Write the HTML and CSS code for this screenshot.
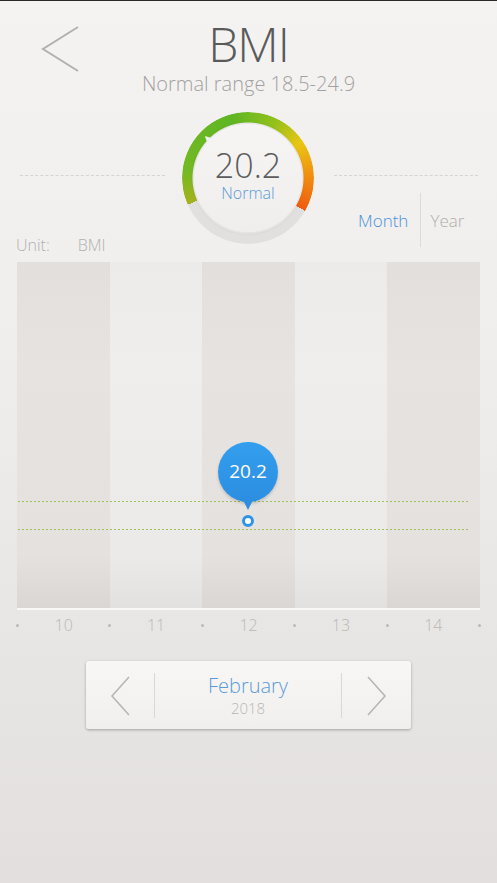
FILE: index.html
```html
<!DOCTYPE html>
<html lang="en">
<head>
    <meta charset="UTF-8">
    <meta name="viewport" content="width=device-width, initial-scale=1.0">
    <title>BMI</title>
    <link rel="stylesheet" href="styles.css">
</head>
<body>
    <header class="top">
        <a class="back" href="#">
            <svg width="40" height="48" viewBox="0 0 40 48"><polyline points="38,2 3,24 38,46" fill="none" stroke="#b3b1b0" stroke-width="2"/></svg>
        </a>
        <div class="title-block">
            <h1>BMI</h1>
            <p class="range">Normal range 18.5-24.9</p>
        </div>
        <span></span>
    </header>

    <section class="summary">
        <div class="side left">
            <div class="dots"></div>
            <div class="unit"><span>Unit:</span><span>BMI</span></div>
        </div>
        <div class="gauge">
            <div class="ring"></div>
            <div class="dial">
                <div class="value">20.2</div>
                <div class="state">Normal</div>
            </div>
        </div>
        <div class="side right">
            <div class="dots"></div>
            <div class="period">
                <span class="active">Month</span>
                <span class="sep"></span>
                <span>Year</span>
            </div>
        </div>
    </section>

    <section class="chart">
        <div class="col dark"></div>
        <div class="col"></div>
        <div class="col dark"></div>
        <div class="col"></div>
        <div class="col dark"></div>
        <div class="limit upper"></div>
        <div class="limit lower"></div>
        <div class="bubble">20.2</div>
        <div class="point"></div>
    </section>

    <div class="axis">
        <i></i><span>10</span><i></i><span>11</span><i></i><span>12</span><i></i><span>13</span><i></i><span>14</span><i></i>
    </div>

    <div class="pager">
        <a class="arrow" href="#">
            <svg width="20" height="40" viewBox="0 0 20 40"><polyline points="19,1 2,20 19,39" fill="none" stroke="#b8b6b4" stroke-width="1.6"/></svg>
        </a>
        <div class="month">
            <div class="name">February</div>
            <div class="year">2018</div>
        </div>
        <a class="arrow" href="#">
            <svg width="20" height="40" viewBox="0 0 20 40"><polyline points="1,1 18,20 1,39" fill="none" stroke="#b8b6b4" stroke-width="1.6"/></svg>
        </a>
    </div>
</body>
</html>
```

FILE: styles.css
```css
body {
    font-family: 'Open Sans', 'Liberation Sans', sans-serif;
    font-weight: 300;
    margin: 0;
    min-height: 882px;
    border-top: 1px solid #2a2a2a;
    background: linear-gradient(#f4f3f2, #efeeed 40%, #e2dfde);
    color: #555;
}
.top {
    display: grid;
    grid-template-columns: 1fr auto 1fr;
    align-items: start;
}
.back {
    margin: 24px 0 0 40px;
    width: 40px;
}
.title-block {
    text-align: center;
}
h1 {
    margin: 15px 0 0;
    font-size: 48px;
    font-weight: 300;
    line-height: 56px;
    color: #5a5a5a;
    letter-spacing: -1px;
}
.range {
    margin: 0;
    font-size: 20px;
    line-height: 24px;
    color: #a3a1a0;
}
.summary {
    display: grid;
    grid-template-columns: 182px 132px 1fr;
    height: 147px;
    margin-top: 13px;
}
.side {
    display: flex;
    flex-direction: column;
}
.dots {
    margin-top: 66px;
    border-top: 1px dashed #d6d4d2;
}
.left .dots {
    margin-left: 20px;
    margin-right: 17px;
}
.right .dots {
    margin-left: 20px;
    margin-right: 19px;
}
.unit {
    margin-top: auto;
    margin-left: 16px;
    display: flex;
    gap: 28px;
    font-size: 16px;
    line-height: 22px;
    color: #b2b0ae;
}
.gauge {
    position: relative;
    width: 132px;
    height: 132px;
    margin-top: 3px;
    display: grid;
    place-items: center;
}
.gauge::after {
    content: "";
    position: absolute;
    left: 22px;
    top: 23px;
    border-left: 3px solid transparent;
    border-right: 3px solid transparent;
    border-bottom: 6px solid #f0f1ea;
    transform: rotate(-45deg);
}
.ring {
    position: absolute;
    inset: 0;
    border-radius: 50%;
    background: conic-gradient(from 246deg, #a5b21c 0deg, #74b922 30deg, #5fb623 100deg, #93c11c 140deg, #e9c612 170deg, #f09a12 195deg, #ef5c0e 234deg, #e1e0de 234deg, #e1e0de 360deg);
    -webkit-mask: radial-gradient(circle, transparent 55px, #000 56px);
    mask: radial-gradient(circle, transparent 55px, #000 56px);
}
.dial {
    position: relative;
    width: 108px;
    height: 108px;
    border-radius: 50%;
    background: linear-gradient(#f6f5f4, #efeeed);
    box-shadow: 0 0 4px rgba(0,0,0,0.12);
    text-align: center;
}
.value {
    margin-top: 25px;
    font-size: 34px;
    line-height: 32px;
    color: #5c5c5c;
}
.state {
    margin-top: 4px;
    font-size: 16px;
    line-height: 16px;
    color: #5b9bd5;
}
.period {
    margin-top: auto;
    margin-left: 44px;
    display: flex;
    align-items: center;
    height: 54px;
    font-size: 17px;
    color: #b0aeac;
    margin-bottom: 9px;
}
.period .active {
    color: #4a90d9;
}
.sep {
    width: 1px;
    height: 54px;
    background: #dcdad8;
    margin: 0 9px 0 12px;
}
.chart {
    position: relative;
    display: flex;
    height: 346px;
    margin: 6px 17px 0;
    border-bottom: 2px solid #f8f7f6;
    box-shadow: inset 0 8px 10px -6px rgba(0,0,0,0.12), inset 3px 0 6px -3px rgba(0,0,0,0.12), inset -3px 0 6px -3px rgba(0,0,0,0.12);
}
.col {
    flex: 1;
    background: linear-gradient(#ecebe9, #efeeec 30%, #eceae8 85%, #e3e1df);
}
.col.dark {
    background: linear-gradient(#e2dfdd, #e6e3e1 30%, #e4e1df 85%, #d9d6d4);
}
.limit {
    position: absolute;
    left: 1px;
    right: 12px;
    height: 1px;
    background: repeating-linear-gradient(to right, #9cc35a 0 2px, transparent 2px 4px);
}
.limit.upper {
    top: 239px;
}
.limit.lower {
    top: 267px;
}
.bubble {
    position: absolute;
    left: 201px;
    top: 180px;
    width: 60px;
    height: 60px;
    border-radius: 50%;
    background: linear-gradient(#349eee, #2c8ee0);
    box-shadow: 0 2px 3px rgba(0,0,0,0.15);
    color: #fff;
    font-weight: 400;
    font-size: 19px;
    line-height: 58px;
    text-align: center;
}
.bubble::after {
    content: "";
    position: absolute;
    left: 23px;
    top: 54px;
    border-left: 7px solid transparent;
    border-right: 7px solid transparent;
    border-top: 14px solid #2c8ee0;
}
.point {
    position: absolute;
    left: 225px;
    top: 253px;
    width: 6px;
    height: 6px;
    border: 3px solid #2e94e6;
    border-radius: 50%;
    background: #fff;
}
.axis {
    display: flex;
    align-items: center;
    height: 30px;
    margin: 0 16px;
}
.axis i {
    width: 3px;
    height: 3px;
    border-radius: 50%;
    background: #bcb9b7;
}
.axis span {
    flex: 1;
    text-align: center;
    font-size: 16px;
    color: #bab7b5;
}
.pager {
    display: grid;
    grid-template-columns: 68px 1fr 69px;
    width: 325px;
    height: 68px;
    margin: 21px auto 0;
    border-radius: 3px;
    background: linear-gradient(#f8f7f6, #f0efee);
    box-shadow: 0 1px 3px rgba(0,0,0,0.3);
}
.arrow {
    display: flex;
    align-items: center;
    justify-content: center;
}
.month {
    margin: 12px 0;
    border-left: 1px solid #dad8d6;
    border-right: 1px solid #dad8d6;
    text-align: center;
}
.name {
    font-size: 20px;
    line-height: 24px;
    margin-top: 1px;
    color: #5b9bd5;
}
.year {
    font-size: 15px;
    line-height: 20px;
    color: #b8b6b4;
}
```
